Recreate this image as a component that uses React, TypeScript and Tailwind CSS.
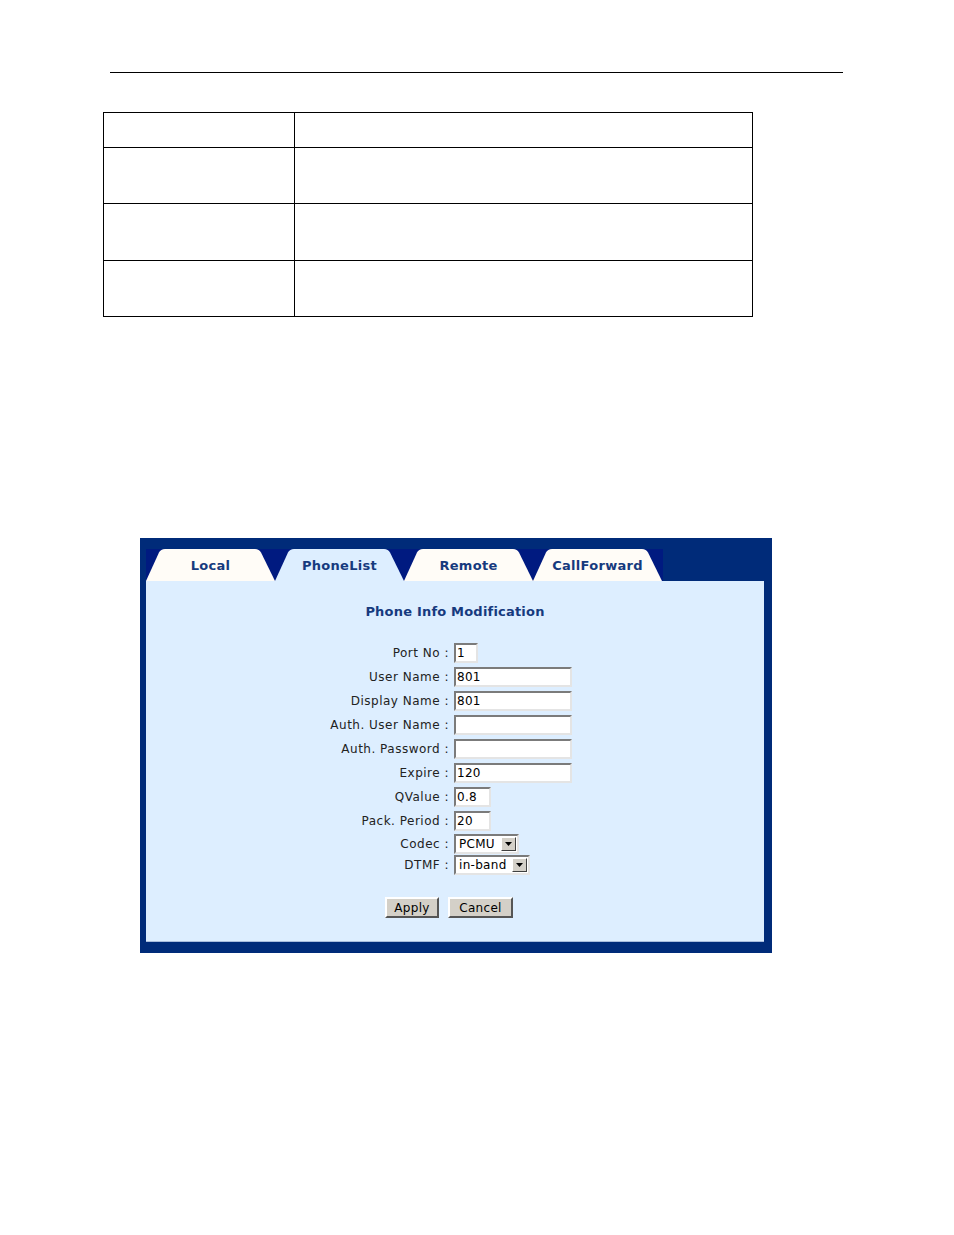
import React from "react";

const TAB_PATH = "M0 32 L13 3.5 Q14.8 0 19 0 L109 0 Q113.2 0 115 3.5 L129 32 Z";

function Tab({ label, active }: { label: string; active?: boolean }) {
  return (
    <div className="relative w-[129px] h-[32px] flex items-center justify-center shrink-0">
      <svg className="absolute inset-0" width="129" height="32" viewBox="0 0 129 32">
        <path d={TAB_PATH} fill={active ? "#ddeeff" : "#fffcf7"} />
      </svg>
      <span className="relative text-[13px] font-bold text-[#163a7e] leading-none tracking-[0.3px]">{label}</span>
    </div>
  );
}

function TextBox({ value, w }: { value: string; w: string }) {
  return (
    <div
      className={`${w} h-[20px] bg-white border-2 border-t-[#7b7b7b] border-l-[#7b7b7b] border-b-[#e4e4e4] border-r-[#e4e4e4] flex items-center pl-[1px] text-[12px] text-black leading-none tracking-[0.3px]`}
    >
      {value}
    </div>
  );
}

function SelectBox({ value, w }: { value: string; w: string }) {
  return (
    <div
      className={`${w} h-[20px] bg-white border-2 border-t-[#7b7b7b] border-l-[#7b7b7b] border-b-[#e4e4e4] border-r-[#e4e4e4] flex items-center justify-between text-[12px] text-black leading-none tracking-[0.3px]`}
    >
      <span className="pl-[3px]">{value}</span>
      <div className="w-[15px] h-[14px] mr-[1px] bg-[#d4d0c8] border border-t-white border-l-white border-b-[#404040] border-r-[#404040] flex items-center justify-center">
        <svg width="7" height="4" viewBox="0 0 7 4">
          <path d="M0 0 H7 L3.5 4 Z" fill="#000" />
        </svg>
      </div>
    </div>
  );
}

const rows: { label: string; kind: "text" | "select"; value: string; w: string }[] = [
  { label: "Port No :", kind: "text", value: "1", w: "w-[24px]" },
  { label: "User Name :", kind: "text", value: "801", w: "w-[118px]" },
  { label: "Display Name :", kind: "text", value: "801", w: "w-[118px]" },
  { label: "Auth. User Name :", kind: "text", value: "", w: "w-[118px]" },
  { label: "Auth. Password :", kind: "text", value: "", w: "w-[118px]" },
  { label: "Expire :", kind: "text", value: "120", w: "w-[118px]" },
  { label: "QValue :", kind: "text", value: "0.8", w: "w-[37px]" },
  { label: "Pack. Period :", kind: "text", value: "20", w: "w-[37px]" },
  { label: "Codec :", kind: "select", value: "PCMU", w: "w-[65px]" },
  { label: "DTMF :", kind: "select", value: "in-band", w: "w-[76px]" },
];

export default function App() {
  return (
    <div className="w-[954px] h-[1235px] bg-white overflow-hidden font-['DejaVu_Sans',sans-serif]">
      <div className="pt-[72px]">
        <div className="ml-[110px] w-[733px] h-px bg-black" />
      </div>

      <table className="ml-[103px] mt-[39px] w-[650px] border-collapse">
        <tbody>
          <tr>
            <td className="w-[191px] h-[35px] border border-black" />
            <td className="h-[35px] border border-black" />
          </tr>
          <tr>
            <td className="h-[56px] border border-black" />
            <td className="h-[56px] border border-black" />
          </tr>
          <tr>
            <td className="h-[57px] border border-black" />
            <td className="h-[57px] border border-black" />
          </tr>
          <tr>
            <td className="h-[56px] border border-black" />
            <td className="h-[56px] border border-black" />
          </tr>
        </tbody>
      </table>

      <div className="ml-[140px] mt-[221px] w-[632px] h-[415px] bg-[#002b79] pt-[11px] pl-[6px] pr-[8px] pb-[11px] flex flex-col">
        <div className="flex w-[517px] h-[32px] bg-[#001a80]">
          <Tab label="Local" />
          <Tab label="PhoneList" active />
          <Tab label="Remote" />
          <Tab label="CallForward" />
        </div>
        <div className="flex-1 bg-[#ddeeff] border-b border-[#a9bcdc] flex flex-col">
          <div className="pt-[23px] text-center text-[13px] font-bold text-[#163a7e] leading-[16px] tracking-[0.2px]">
            Phone Info Modification
          </div>
          <div className="mt-[21px] flex flex-col">
            {rows.map((r) => (
              <div
                key={r.label}
                className={`grid grid-cols-[303px_1fr] gap-x-[5px] items-center ${r.kind === "text" ? "h-[24px]" : "h-[21px]"}`}
              >
                <div className="text-right text-[12px] text-[#222] leading-none tracking-[0.5px]">{r.label}</div>
                <div>
                  {r.kind === "text" ? (
                    <TextBox value={r.value} w={r.w} />
                  ) : (
                    <SelectBox value={r.value} w={r.w} />
                  )}
                </div>
              </div>
            ))}
          </div>
          <div className="mt-[22px] flex justify-center gap-[9px] pr-[12px]">
            <button className="w-[54px] h-[21px] bg-[#d4d0c8] border-2 border-t-white border-l-white border-b-[#555] border-r-[#555] text-[12px] text-black leading-none tracking-[0.3px] font-['DejaVu_Sans',sans-serif]">
              Apply
            </button>
            <button className="w-[65px] h-[21px] bg-[#d4d0c8] border-2 border-t-white border-l-white border-b-[#555] border-r-[#555] text-[12px] text-black leading-none tracking-[0.3px] font-['DejaVu_Sans',sans-serif]">
              Cancel
            </button>
          </div>
        </div>
      </div>
    </div>
  );
}
